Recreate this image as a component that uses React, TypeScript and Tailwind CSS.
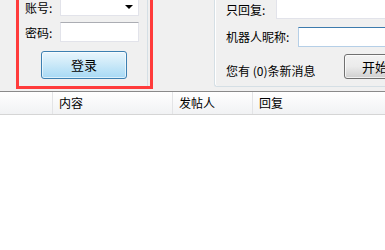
import React from "react";

const font = "font-['SimSun','Noto_Sans_CJK_SC',sans-serif]";

const TextBox: React.FC<{ className?: string; focused?: boolean }> = ({ className = "", focused }) => (
  <div
    className={
      focused
        ? `bg-white border border-[#b5cfe7] border-t-[#3d7bad] ${className}`
        : `bg-white border border-[#e2e3ea] border-t-[#abadb3] ${className}`
    }
  />
);

const App: React.FC = () => {
  return (
    <div className={`w-[385px] h-[250px] overflow-hidden bg-white text-[12px] leading-[12px] text-black ${font}`}>
      {/* top panel */}
      <div className="flex h-[91px] items-start bg-[#f0f0f0] overflow-hidden">
        {/* login group, marked in red */}
        <div className="ml-[16px] -mt-[10px] flex h-[99px] w-[137px] shrink-0 border-[3px] border-[#ff3b3b]">
          <div className="mr-[2px] flex flex-1 flex-col border-r border-[#d5dfe5]">
            <div className="mt-[3px] flex h-[20px] items-center">
              <span className="ml-[6px] mt-[4px] w-[35px]">账号:</span>
              <div className="relative h-[20px] w-[79px] bg-white border border-[#e2e3ea] border-t-[#e2e3ea]">
                <span className="absolute right-[5px] top-[8px] h-0 w-0 border-x-[4px] border-t-[4px] border-x-transparent border-t-black" />
              </div>
            </div>
            <div className="mt-[6px] flex h-[20px] items-center">
              <span className="ml-[6px] mt-[2px] w-[35px]">密码:</span>
              <TextBox className="h-[20px] w-[79px]" />
            </div>
            <button className="ml-[22px] mt-[9px] flex h-[28px] w-[86px] items-center justify-center rounded-[3px] border border-[#3c7fb1] bg-gradient-to-b from-[#eaf6fd] via-[#c9e8f8] to-[#a7d9f5] text-[13px] shadow-[inset_0_0_0_1px_rgba(255,255,255,0.6)]">
              登录
            </button>
          </div>
        </div>

        {/* bot settings group */}
        <div className="ml-[61px] -mt-[10px] flex h-[97px] flex-1 flex-col rounded-bl-[3px] border border-r-0 border-[#d5dfe5] shadow-[inset_1px_0_0_#fff]">
          <div className="mt-[7px] flex h-[21px] items-center">
            <span className="ml-[11px] w-[50px] pt-[2px]">只回复:</span>
            <TextBox className="h-[21px] flex-1 border-r-0" />
          </div>
          <div className="mt-[8px] flex h-[20px] items-center">
            <span className="ml-[11px] w-[72px]">机器人昵称:</span>
            <TextBox focused className="h-[20px] flex-1 border-r-0" />
          </div>
          <div className="mt-[7px] flex h-[25px] items-start">
            <span className="ml-[11px] mt-[11px] w-[118px] whitespace-nowrap">您有 (0)条新消息</span>
            <button className="flex h-[25px] w-[75px] items-center rounded-[3px] border border-[#707070] bg-gradient-to-b from-[#f2f2f2] via-[#ebebeb] to-[#cfcfcf] pl-[17px] text-[13px] shadow-[inset_0_0_0_1px_rgba(255,255,255,0.7)]">
              开始
            </button>
          </div>
        </div>
      </div>

      {/* list */}
      <div className="border-t border-[#8a8a8a]">
        <div className="flex h-[23px] border-b border-[#d5d5d5] bg-gradient-to-b from-white to-[#f1f2f4]">
          <div className="w-[53px] border-r border-[#e3e4e6]" />
          <div className="flex w-[120px] items-center border-r border-[#e3e4e6] pl-[6px]">内容</div>
          <div className="flex w-[80px] items-center border-r border-[#e3e4e6] pl-[6px]">发帖人</div>
          <div className="flex flex-1 items-center pl-[6px]">回复</div>
        </div>
      </div>
    </div>
  );
};

export default App;
